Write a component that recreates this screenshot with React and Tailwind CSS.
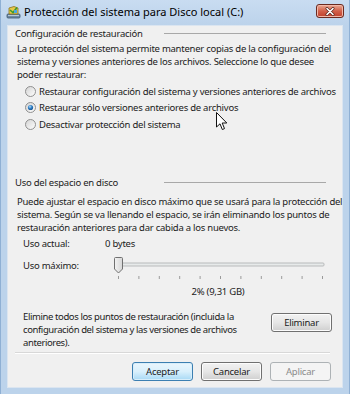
import React from 'react';

const Radio = ({ checked }) => (
  <svg width="11" height="11" viewBox="0 0 11 11" className="shrink-0">
    <defs>
      <linearGradient id="rb" x1="0" y1="0" x2="1" y2="1">
        <stop offset="0" stopColor="#d2d2d2" />
        <stop offset="1" stopColor="#ffffff" />
      </linearGradient>
      <radialGradient id="rd" cx="0.4" cy="0.35" r="0.7">
        <stop offset="0" stopColor="#b6dcf7" />
        <stop offset="0.5" stopColor="#2f7fc6" />
        <stop offset="1" stopColor="#154f8c" />
      </radialGradient>
    </defs>
    <circle cx="5.5" cy="5.5" r="5" fill="url(#rb)" stroke="#8f8f8f" strokeWidth="1" />
    {checked && <circle cx="5.5" cy="5.5" r="2.6" fill="url(#rd)" />}
  </svg>
);

const GroupHeading = ({ children }) => (
  <div className="flex items-center pl-[7px] pr-[16px] h-[13px]">
    <span className="flex-1 whitespace-nowrap">{children}</span>
    <div className="w-[162px] h-px bg-[#a8a8a8]" />
  </div>
);

const Button = ({ children, variant }) => {
  const styles = {
    default: 'border-[#3c7fb1] bg-gradient-to-b from-[#eaf6fd] via-[#d9f0fc] to-[#a7d9f5] text-[#1a1a1a] shadow-[inset_0_0_0_1px_#d8eefa]',
    normal: 'border-[#707070] bg-gradient-to-b from-[#f2f2f2] via-[#e6e6e6] to-[#cfcfcf] text-[#1a1a1a] shadow-[inset_0_0_0_1px_#fcfcfc]',
    disabled: 'border-[#adb2b5] bg-[#f4f4f4] text-[#8a8a8a]',
  };
  return (
    <div className={`w-[61px] h-[19px] rounded-[3px] border flex items-center justify-center ${styles[variant]}`}>
      {children}
    </div>
  );
};

const Slider = () => {
  const ticks = Array.from({ length: 11 }, (_, i) => 9.5 + i * 20.4);
  return (
    <svg width="220" height="26" viewBox="0 0 220 26" className="shrink-0">
      <rect x="9" y="8" width="206" height="3" fill="#e7eaea" stroke="#b8babb" strokeWidth="1" rx="1" />
      {ticks.map((x) => (
        <line key={x} x1={x} y1="21" x2={x} y2="24" stroke="#9a9a9a" strokeWidth="1" />
      ))}
      <defs>
        <linearGradient id="th" x1="0" y1="0" x2="1" y2="0">
          <stop offset="0" stopColor="#f3f3f3" />
          <stop offset="1" stopColor="#d6d6d6" />
        </linearGradient>
      </defs>
      <path d="M5.5 3.5 Q5.5 2.5 6.5 2.5 L12.5 2.5 Q13.5 2.5 13.5 3.5 L13.5 14 L9.5 18 L5.5 14 Z" fill="url(#th)" stroke="#707070" strokeWidth="1" />
    </svg>
  );
};

export default function App() {
  return (
    <div
      className="relative w-[350px] h-[394px] overflow-hidden bg-[#bcd3eb] border-l border-r border-[#8fb0d4] text-[9.5px] tracking-[-0.25px] text-[#1b1b1b]"
      style={{ fontFamily: '"Noto Sans", "Open Sans", sans-serif' }}
    >
      {/* title bar */}
      <div className="h-[25px] flex items-center bg-gradient-to-b from-[#c9dcf1] to-[#bcd3eb]">
        <svg width="15" height="15" viewBox="0 0 15 15" className="ml-[5px] mr-[3px] shrink-0">
          <rect x="1" y="9" width="13" height="4" rx="1" fill="#6f8aa3" stroke="#3e5570" strokeWidth="0.8" />
          <rect x="2" y="10" width="11" height="1" fill="#b6c8d8" />
          <path d="M3 9 L3 3 L8 1.5 L12 3 L12 9 Z" fill="#e8c84a" stroke="#8a7420" strokeWidth="0.8" />
          <path d="M4 5 L7 7.5 L11 2.5" fill="none" stroke="#3b9a2e" strokeWidth="1.6" />
          <rect x="8" y="5" width="3" height="3" fill="#4aa7e0" />
        </svg>
        <span className="text-[11px] tracking-normal text-black whitespace-nowrap">Protección del sistema para Disco local (C:)</span>
        <div className="flex-1" />
        <div className="mr-[5px] mb-[3px] w-[28px] h-[14px] rounded-[3px] border border-[#6b2a20] bg-gradient-to-b from-[#e9a995] via-[#d2604a] to-[#c0402c] flex items-center justify-center shadow-[inset_0_0_0_1px_#f2b8a8]">
          <svg width="10" height="9" viewBox="0 0 10 9">
            <path d="M2 1.5 L8 7.5 M8 1.5 L2 7.5" stroke="#5a2a22" strokeWidth="3" strokeLinecap="round" />
            <path d="M2 1.5 L8 7.5 M8 1.5 L2 7.5" stroke="#ffffff" strokeWidth="1.6" strokeLinecap="round" />
          </svg>
        </div>
      </div>

      {/* client area */}
      <div className="mx-[6px] h-[363px] bg-[#f0f0f0] border border-[#dbe5f0] flex flex-col leading-[13px]">
        <div className="pt-[1px]">
          <GroupHeading>Configuración de restauración</GroupHeading>
        </div>
        <div className="mt-[2px] pl-[9px] whitespace-nowrap">
          La protección del sistema permite mantener copias de la configuración del
          <br />
          sistema y versiones anteriores de los archivos. Seleccione lo que desee
          <br />
          poder restaurar:
        </div>
        <div className="mt-[2px] flex flex-col">
          <div className="h-[16.5px] flex items-center pl-[17px] gap-[3px] whitespace-nowrap">
            <Radio />
            <span>Restaurar configuración del sistema y versiones anteriores de archivos</span>
          </div>
          <div className="h-[16.5px] flex items-center pl-[17px] gap-[3px] whitespace-nowrap">
            <Radio checked />
            <span>Restaurar sólo versiones anteriores de archivos</span>
          </div>
          <div className="h-[16.5px] flex items-center pl-[17px] gap-[3px] whitespace-nowrap">
            <Radio />
            <span>Desactivar protección del sistema</span>
          </div>
        </div>

        <div className="mt-[43px]">
          <GroupHeading>Uso del espacio en disco</GroupHeading>
        </div>
        <div className="mt-[6px] pl-[9px] whitespace-nowrap">
          Puede ajustar el espacio en disco máximo que se usará para la protección del
          <br />
          sistema. Según se va llenando el espacio, se irán eliminando los puntos de
          <br />
          restauración anteriores para dar cabida a los nuevos.
        </div>
        <div className="mt-[3.5px] flex pl-[15px]">
          <span className="w-[82px]">Uso actual:</span>
          <span>0 bytes</span>
        </div>
        <div className="mt-[4.5px] flex items-start pl-[15px]">
          <span className="w-[86px] mt-[4.5px]">Uso máximo:</span>
          <Slider />
        </div>
        <div className="mt-[4.5px] ml-[100px] w-[220px] text-center">2% (9,31 GB)</div>

        <div className="mt-[12px] flex items-start pl-[15px] pr-[10px]">
          <div className="flex-1 whitespace-nowrap tracking-[-0.4px]">
            Elimine todos los puntos de restauración (incluida la
            <br />
            configuración del sistema y las versiones de archivos
            <br />
            anteriores).
          </div>
          <div className="mt-[3px]">
            <Button variant="normal">Eliminar</Button>
          </div>
        </div>

        <div className="mt-[3px] mx-[7px] mr-[12px] h-[2px] border-t border-[#d8d8d8] border-b border-b-white" />

        <div className="mt-[8px] flex justify-end gap-[8px] pr-[11px]">
          <Button variant="default">Aceptar</Button>
          <Button variant="normal">Cancelar</Button>
          <Button variant="disabled">Aplicar</Button>
        </div>
      </div>

      {/* mouse pointer */}
      <svg width="12" height="19" viewBox="0 0 12 19" className="absolute left-[215px] top-[112px]">
        <path d="M0.5 0.5 L0.5 15 L4 11.8 L6.3 17.5 L8.5 16.6 L6.2 11 L10.8 11 Z" fill="#ffffff" stroke="#111111" strokeWidth="1" strokeLinejoin="round" />
      </svg>
    </div>
  );
}
